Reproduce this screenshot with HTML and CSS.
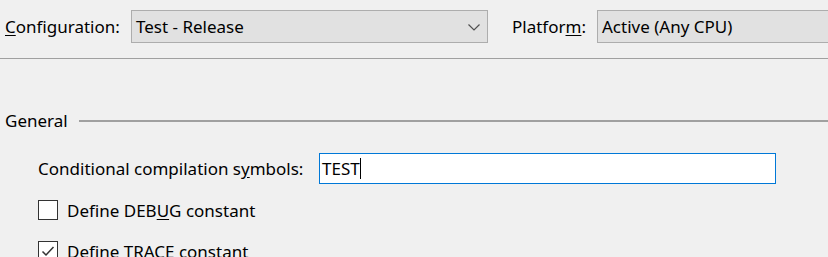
FILE: index.html
```html
<!DOCTYPE html>
<html lang="en">
<head>
  <meta charset="UTF-8">
  <meta name="viewport" content="width=device-width, initial-scale=1.0">
  <title>Build Properties</title>
  <link rel="stylesheet" href="styles.css">
</head>
<body>
  <div class="toolbar">
    <label class="lbl-config"><u>C</u>onfiguration:</label>
    <div class="combo combo-config">
      <span>Test - Release</span>
      <svg class="chev" width="12" height="7" viewBox="0 0 12 7"><path d="M0.5 0.5 L6 6 L11.5 0.5" fill="none" stroke="#505050" stroke-width="1.2"/></svg>
    </div>
    <label class="lbl-platform">Platfor<u>m</u>:</label>
    <div class="combo combo-platform"><span>Active (Any CPU)</span></div>
  </div>

  <div class="group">
    <div class="group-head">
      <span>General</span>
      <div class="rule"></div>
    </div>

    <div class="field">
      <label>Conditional compilation s<u>y</u>mbols:</label>
      <div class="textbox">TEST<span class="caret"></span></div>
    </div>

    <div class="check">
      <span class="box"></span>
      <span>Define DEB<u>U</u>G constant</span>
    </div>
    <div class="check">
      <span class="box"><svg width="18" height="18" viewBox="0 0 18 18"><path d="M3.5 9.5 L7 13 L14.5 5" fill="none" stroke="#333" stroke-width="1.5"/></svg></span>
      <span>Define TRACE constant</span>
    </div>
  </div>
</body>
</html>
```

FILE: styles.css
```css
* { margin: 0; padding: 0; box-sizing: border-box; }
html, body { height: 100%; }
body {
  background: #f0f0f0;
  color: #000;
  font-family: "Noto Sans", "Open Sans", sans-serif;
  font-size: 17px;
  overflow: hidden;
}
u { text-decoration: underline; text-underline-offset: 2px; }

/* Top bar */
.toolbar {
  display: flex; align-items: center;
  height: 59px; padding: 10px 0 15px 5px;
  border-bottom: 1px solid #a0a0a0;
  white-space: nowrap;
}
.toolbar > * { flex-shrink: 0; }
.lbl-config { width: 126px; }
.combo {
  height: 33px; background: #e1e1e1; border: 1px solid #adadad;
  display: flex; align-items: center; padding-left: 4px;
}
.combo-config { width: 357px; position: relative; }
.chev { position: absolute; right: 7px; top: 13px; }
.lbl-platform { margin-left: 24px; width: 85px; }
.combo-platform { width: 260px; }

/* General group */
.group { padding: 50px 0 0 5px; }
.group-head { display: flex; align-items: center; height: 22px; }
.group-head .rule { flex: 1; height: 2px; background: #a0a0a0; margin-left: 11px; margin-top: 1px; }

.field { display: flex; align-items: center; margin: 22px 0 0 33px; }
.field label { width: 281px; flex-shrink: 0; }
.textbox {
  width: 457px; height: 31px; background: #fff; border: 1px solid #0078d7;
  display: flex; align-items: center; padding-left: 2px;
}
.caret { display: inline-block; width: 1px; height: 21px; background: #000; }

.check { display: flex; align-items: center; margin: 16px 0 0 33px; height: 20px; }
.check + .check { margin-top: 21px; }
.check .box {
  width: 20px; height: 20px; border: 1px solid #333; background: #fff;
  margin-right: 9px; display: flex; align-items: center; justify-content: center;
}
```
